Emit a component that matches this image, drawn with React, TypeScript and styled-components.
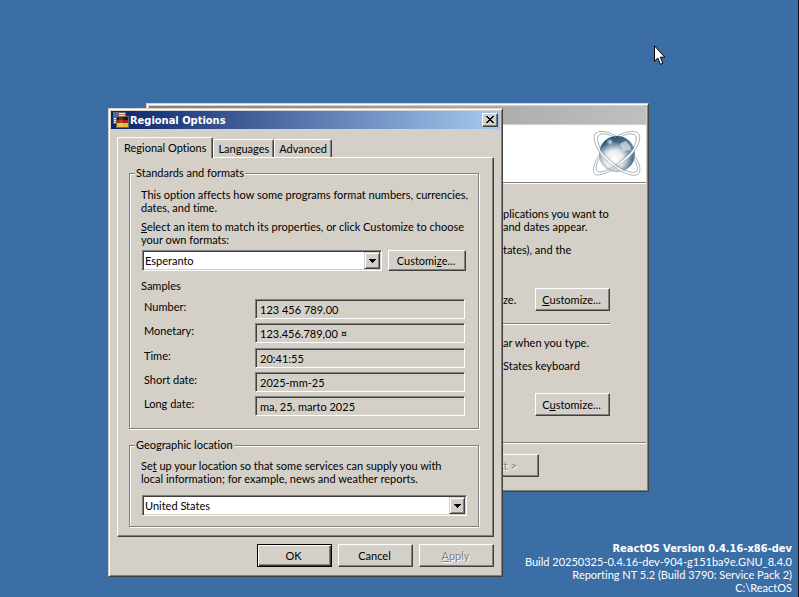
import React from "react";
import styled, { createGlobalStyle, css } from "styled-components";

const face = "#d4d0c8";
const shade = "#808080";
const dark = "#404040";
const uiFont = 'Lato, "Liberation Sans", sans-serif';
const boldFont = '"DejaVu Sans Condensed", "DejaVu Sans", sans-serif';

const GlobalStyle = createGlobalStyle`
  *, *::before, *::after { box-sizing: border-box; }
  body { margin: 0; background: #3a6ea5; }
  body, button, input, select {
    font-family: ${uiFont};
    font-size: 11px;
    line-height: 13px;
    font-variant-ligatures: none;
    color: #000;
  }
  p { margin: 0; }
`;

const raised = css`
  border: 1px solid;
  border-color: #fff ${dark} ${dark} #fff;
  box-shadow: inset -1px -1px 0 ${shade};
`;

const sunken = css`
  border: 1px solid;
  border-color: ${shade} #fff #fff ${shade};
  box-shadow: inset 1px 1px 0 ${dark}, inset -1px -1px 0 ${face};
`;

const Desktop = styled.main`
  position: relative;
  display: flex;
  flex-direction: column;
  justify-content: flex-end;
  min-height: 100vh;
  background: #3a6ea5;
  border-right: 1px solid #0a1420;
  overflow: hidden;
`;

const VersionInfo = styled.footer`
  padding: 0 6px 3px;
  color: #fff;
  text-align: right;
`;

const VersionTitle = styled.strong`
  display: block;
  font-family: ${boldFont};
`;

const Window = styled.section<{ $x: number; $y: number; $width: number }>`
  position: absolute;
  left: ${(p) => p.$x}px;
  top: ${(p) => p.$y}px;
  width: ${(p) => p.$width}px;
  padding: 2px;
  background: ${face};
  border: 1px solid;
  border-color: ${face} ${dark} ${dark} ${face};
  box-shadow: inset 1px 1px 0 #fff, inset -1px -1px 0 ${shade};
`;

const TitleBar = styled.header<{ $active?: boolean }>`
  display: flex;
  align-items: center;
  gap: 1px;
  height: 18px;
  padding: 0 2px;
  background: ${(p) =>
    p.$active ? "linear-gradient(to right, #0a246a, #a6caf0)" : "linear-gradient(to right, #808080, #c0c0c0)"};
`;

const TitleText = styled.h1`
  flex: 1;
  margin: 0;
  font: bold 11px/13px ${boldFont};
  color: #fff;
`;

const CloseButton = styled.button`
  display: grid;
  place-items: center;
  width: 16px;
  height: 14px;
  padding: 0 1px 1px 0;
  background: ${face};
  ${raised}
`;

const Button = styled.button<{ $wide?: boolean; $default?: boolean; $short?: boolean }>`
  flex: none;
  width: ${(p) => (p.$wide ? 78 : 75)}px;
  height: ${(p) => (p.$short ? 21 : 23)}px;
  padding: 0 2px 1px 0;
  background: ${face};
  ${raised}
  ${(p) =>
    p.$default &&
    css`
      border-color: #000;
      box-shadow: inset 1px 1px 0 #fff, inset -1px -1px 0 ${dark}, inset -2px -2px 0 ${shade};
    `}
  &:disabled {
    color: ${shade};
    text-shadow: 1px 1px 0 #fff;
  }
`;

/* Regional Options dialog */

const DialogBody = styled.div`
  padding: 8px 6px 7px;
  white-space: nowrap;
`;

const TabList = styled.div`
  display: flex;
  align-items: flex-end;
  height: 20px;
`;

const Tab = styled.button<{ $selected?: boolean }>`
  position: relative;
  height: 18px;
  padding: 0 4px;
  background: ${face};
  border: 1px solid;
  border-color: #fff ${dark} transparent #fff;
  border-bottom: 0;
  border-radius: 2px 2px 0 0;
  box-shadow: inset -1px 0 0 ${shade};
  ${(p) =>
    p.$selected &&
    css`
      z-index: 1;
      height: 21px;
      margin-bottom: -1px;
      padding: 0 6px 1px;
    `}
`;

const TabPage = styled.div`
  padding: 9px 14px 9px 11px;
  ${raised}
`;

const Group = styled.fieldset<{ $last?: boolean }>`
  min-width: 0;
  margin: ${(p) => (p.$last ? "10px 0 0" : "0")};
  padding: ${(p) => (p.$last ? "8px 11px 10px" : "9px 11px 12px")};
  border: 1px solid ${shade};
  box-shadow: 1px 1px 0 #fff, inset 1px 1px 0 #fff;
`;

const Legend = styled.legend`
  margin-left: -6px;
  padding: 0 1px;
  line-height: 12px;
  background: ${face};
`;

const Hint = styled.label`
  display: block;
  margin-top: 6px;
`;

const LocationHint = styled.label`
  display: block;
`;

const FormatRow = styled.div`
  display: flex;
  gap: 6px;
  margin-top: 4px;
  padding: 0 1px;
`;

const LocationRow = styled.div`
  display: flex;
  margin-top: 10px;
  padding-left: 1px;
`;

const Combo = styled.div`
  display: grid;
  flex: 1;
  height: 21px;
  padding: 1px;
  background: #fff;
  ${sunken}
`;

const ComboSelect = styled.select`
  grid-area: 1 / 1;
  width: 100%;
  height: 17px;
  padding: 0 18px 0 1px;
  appearance: none;
  border: 0;
  outline: 0;
  background: transparent;
`;

const ComboArrow = styled.span`
  grid-area: 1 / 1;
  justify-self: end;
  display: grid;
  place-items: center;
  width: 16px;
  height: 17px;
  background: ${face};
  border: 1px solid;
  border-color: ${face} ${dark} ${dark} ${face};
  box-shadow: inset 1px 1px 0 #fff, inset -1px -1px 0 ${shade};
  pointer-events: none;
`;

const SamplesTitle = styled.p`
  margin-top: 8px;
`;

const Samples = styled.div`
  display: grid;
  grid-template-columns: 111px 1fr;
  grid-template-rows: 24px 25px 24px 24px 20px;
  margin-top: 7px;
  padding: 0 2px 0 3px;
`;

const SampleLabel = styled.label`
  padding-top: 1px;
`;

const SampleField = styled.input`
  width: 100%;
  height: 20px;
  padding: 1px 4px 0;
  outline: 0;
  background: ${face};
  ${sunken}
`;

const Actions = styled.div`
  display: flex;
  justify-content: flex-end;
  gap: 6px;
  margin-top: 7px;
`;

/* Setup wizard behind the dialog */

const Divider = styled.hr`
  height: 2px;
  margin: 0;
  border: 0;
  border-top: 1px solid ${shade};
  border-bottom: 1px solid #fff;
`;

const WizardHeader = styled.div`
  display: flex;
  justify-content: flex-end;
  height: 57px;
  margin-top: 1px;
  padding: 4px 3px 0 0;
  background: #fff;
`;

const WizardBody = styled.div`
  display: flex;
  flex-direction: column;
  padding: 23px 36px 26px 354px;
  white-space: nowrap;
`;

const LocaleText = styled.p`
  margin-top: 10px;
`;

const CustomizeRow = styled.div`
  display: flex;
  align-items: center;
  justify-content: space-between;
  margin: 32px 0 12px;
`;

const KeyboardRow = styled.div`
  display: flex;
  justify-content: flex-end;
  margin-top: 21px;
`;

const InputText = styled.p`
  margin-top: 11px;
`;

const WizardFooter = styled.div`
  display: flex;
  justify-content: flex-end;
  padding: 10px 107px 12px 0;
`;

const Pointer = styled.svg`
  position: absolute;
  left: 654px;
  top: 45px;
`;

function FlagsIcon() {
  return (
    <svg width="16" height="16" viewBox="0 0 16 16" shapeRendering="crispEdges" aria-hidden="true">
      <rect x="0" y="0" width="13" height="12" fill="#69696b" />
      <rect x="1" y="1" width="11" height="10" fill="#e8e4e4" />
      <rect x="6" y="2" width="6" height="1" fill="#d0705c" />
      <rect x="1" y="7" width="11" height="1" fill="#d0705c" />
      <rect x="1" y="9" width="11" height="1" fill="#d0705c" />
      <rect x="1" y="1" width="5" height="5" fill="#3e70b0" />
      <rect x="3" y="4" width="13" height="12" fill="#716b4b" />
      <rect x="4" y="5" width="11" height="3" fill="#211c1c" />
      <rect x="4" y="8" width="11" height="3" fill="#b01a16" />
      <rect x="4" y="11" width="11" height="4" fill="#e5bd2b" />
      <rect x="6" y="5" width="4" height="10" fill="#fff" opacity=".15" />
    </svg>
  );
}

function CloseGlyph() {
  return (
    <svg width="8" height="7" viewBox="0 0 8 7" shapeRendering="crispEdges" aria-hidden="true">
      <path d="M0 0h2v1h1v1h2V1h1V0h2v1H7v1H6v1H5v1h1v1h1v1h1v1H6V6H5V5H3v1H2v1H0V6h1V5h1V4h1V3H2V2H1V1H0z" />
    </svg>
  );
}

function ArrowGlyph() {
  return (
    <svg width="7" height="4" viewBox="0 0 7 4" shapeRendering="crispEdges" aria-hidden="true">
      <path d="M0 0h7v1H6v1H5v1H4v1H3V3H2V2H1V1H0z" />
    </svg>
  );
}

function AtomLogo() {
  return (
    <svg width="52" height="50" viewBox="0 0 52 50" fill="none" aria-hidden="true">
      <defs>
        <linearGradient id="globe" x1=".3" y1="0" x2=".6" y2="1">
          <stop offset="0" stopColor="#194461" />
          <stop offset=".4" stopColor="#6c8ba3" />
          <stop offset="1" stopColor="#44698a" />
        </linearGradient>
        <radialGradient id="glow" cx=".42" cy=".66" r=".5">
          <stop offset="0" stopColor="#fff" />
          <stop offset=".5" stopColor="#fff" stopOpacity=".85" />
          <stop offset="1" stopColor="#fff" stopOpacity="0" />
        </radialGradient>
        <radialGradient id="spot">
          <stop offset="0" stopColor="#d8f0ff" />
          <stop offset="1" stopColor="#8fb7d2" stopOpacity="0" />
        </radialGradient>
      </defs>
      <circle cx="26" cy="25" r="18" fill="url(#globe)" />
      <circle cx="26" cy="25" r="18" fill="url(#glow)" />
      <path d="M30 14l5-2 4 5 1 5-4-1-5 2 1-4-3-2z" fill="#dce6ed" opacity=".7" />
      <circle cx="19" cy="13" r="4" fill="url(#spot)" />
      <path d="M6 17C10 28 25 41 38 45" stroke="#fff" strokeWidth="2" />
      <path d="M48 13C44 21 38 29 27 36" stroke="#fff" strokeWidth="2" />
      <g stroke="#8c8f92" strokeWidth=".7">
        <path d="M25 7C18 3 8 0 4 5C1 10 6 22 15 31C24 40 38 48 46 46C52 42 48 33 43 26" />
        <path d="M25 9C18 5 10 3 7 7C5 12 9 21 17 29C26 38 38 45 45 43C48 41 46 35 43 30" />
        <path d="M26 7C34 3 44 0 48 5C51 11 45 22 36 30C27 38 13 47 5 46C0 43 3 33 9 25" />
        <path d="M28 9C34 5 42 3 45 7C47 12 42 21 34 28C26 36 14 44 7 43C4 40 5 34 9 29" />
      </g>
    </svg>
  );
}

function ComboBox({ id, value }: { id: string; value: string }) {
  return (
    <Combo>
      <ComboSelect id={id} defaultValue={value}>
        <option>{value}</option>
      </ComboSelect>
      <ComboArrow>
        <ArrowGlyph />
      </ComboArrow>
    </Combo>
  );
}

const samples = [
  { id: "number", label: "Number:", value: "123 456 789.00" },
  { id: "monetary", label: "Monetary:", value: "123.456.789,00 ¤" },
  { id: "time", label: "Time:", value: "20:41:55" },
  { id: "short-date", label: "Short date:", value: "2025-mm-25" },
  { id: "long-date", label: "Long date:", value: "ma, 25. marto 2025" },
];

function SetupWizard() {
  return (
    <Window $x={146} $y={103} $width={503}>
      <TitleBar />
      <WizardHeader>
        <AtomLogo />
      </WizardHeader>
      <Divider />
      <WizardBody>
        <p>
          plications you want to
          <br />
          and dates appear.
        </p>
        <LocaleText>tates), and the</LocaleText>
        <CustomizeRow>
          <span>ze.</span>
          <Button><u>C</u>ustomize...</Button>
        </CustomizeRow>
        <Divider />
        <InputText>ar when you type.</InputText>
        <LocaleText>States keyboard</LocaleText>
        <KeyboardRow>
          <Button>C<u>u</u>stomize...</Button>
        </KeyboardRow>
      </WizardBody>
      <Divider />
      <WizardFooter>
        <Button disabled>Next &gt;</Button>
      </WizardFooter>
    </Window>
  );
}

function RegionalOptions() {
  return (
    <Window $x={108} $y={108} $width={395} role="dialog" aria-labelledby="dialog-title">
      <TitleBar $active>
        <FlagsIcon />
        <TitleText id="dialog-title">Regional Options</TitleText>
        <CloseButton aria-label="Close">
          <CloseGlyph />
        </CloseButton>
      </TitleBar>
      <DialogBody>
        <TabList role="tablist">
          <Tab role="tab" aria-selected="true" $selected>Regional Options</Tab>
          <Tab role="tab" aria-selected="false">Languages</Tab>
          <Tab role="tab" aria-selected="false">Advanced</Tab>
        </TabList>
        <TabPage role="tabpanel">
          <Group>
            <Legend>Standards and formats</Legend>
            <p>
              This option affects how some programs format numbers, currencies,
              <br />
              dates, and time.
            </p>
            <Hint htmlFor="format">
              <u>S</u>elect an item to match its properties, or click Customize to choose
              <br />
              your own formats:
            </Hint>
            <FormatRow>
              <ComboBox id="format" value="Esperanto" />
              <Button $wide $short>Customi<u>z</u>e...</Button>
            </FormatRow>
            <SamplesTitle>Samples</SamplesTitle>
            <Samples>
              {samples.map((s) => (
                <React.Fragment key={s.id}>
                  <SampleLabel htmlFor={s.id}>{s.label}</SampleLabel>
                  <SampleField id={s.id} readOnly value={s.value} />
                </React.Fragment>
              ))}
            </Samples>
          </Group>
          <Group $last>
            <Legend>Geographic location</Legend>
            <LocationHint htmlFor="location">
              Se<u>t</u> up your location so that some services can supply you with
              <br />
              local information; for example, news and weather reports.
            </LocationHint>
            <LocationRow>
              <ComboBox id="location" value="United States" />
            </LocationRow>
          </Group>
        </TabPage>
        <Actions>
          <Button $default>OK</Button>
          <Button>Cancel</Button>
          <Button disabled><u>A</u>pply</Button>
        </Actions>
      </DialogBody>
    </Window>
  );
}

export default function App() {
  return (
    <>
      <GlobalStyle />
      <Desktop>
        <VersionInfo>
          <VersionTitle>ReactOS Version 0.4.16-x86-dev</VersionTitle>
          Build 20250325-0.4.16-dev-904-g151ba9e.GNU_8.4.0
          <br />
          Reporting NT 5.2 (Build 3790: Service Pack 2)
          <br />
          C:\ReactOS
        </VersionInfo>
        <SetupWizard />
        <RegionalOptions />
        <Pointer width="12" height="21" viewBox="0 0 12 21" aria-hidden="true">
          <path
            d="M.5.8v15.5l3.3-3.2 2.6 6.2 2.5-1-2.6-6.1h4.5z"
            fill="#fff"
            stroke="#000"
            strokeWidth="1"
          />
        </Pointer>
      </Desktop>
    </>
  );
}
